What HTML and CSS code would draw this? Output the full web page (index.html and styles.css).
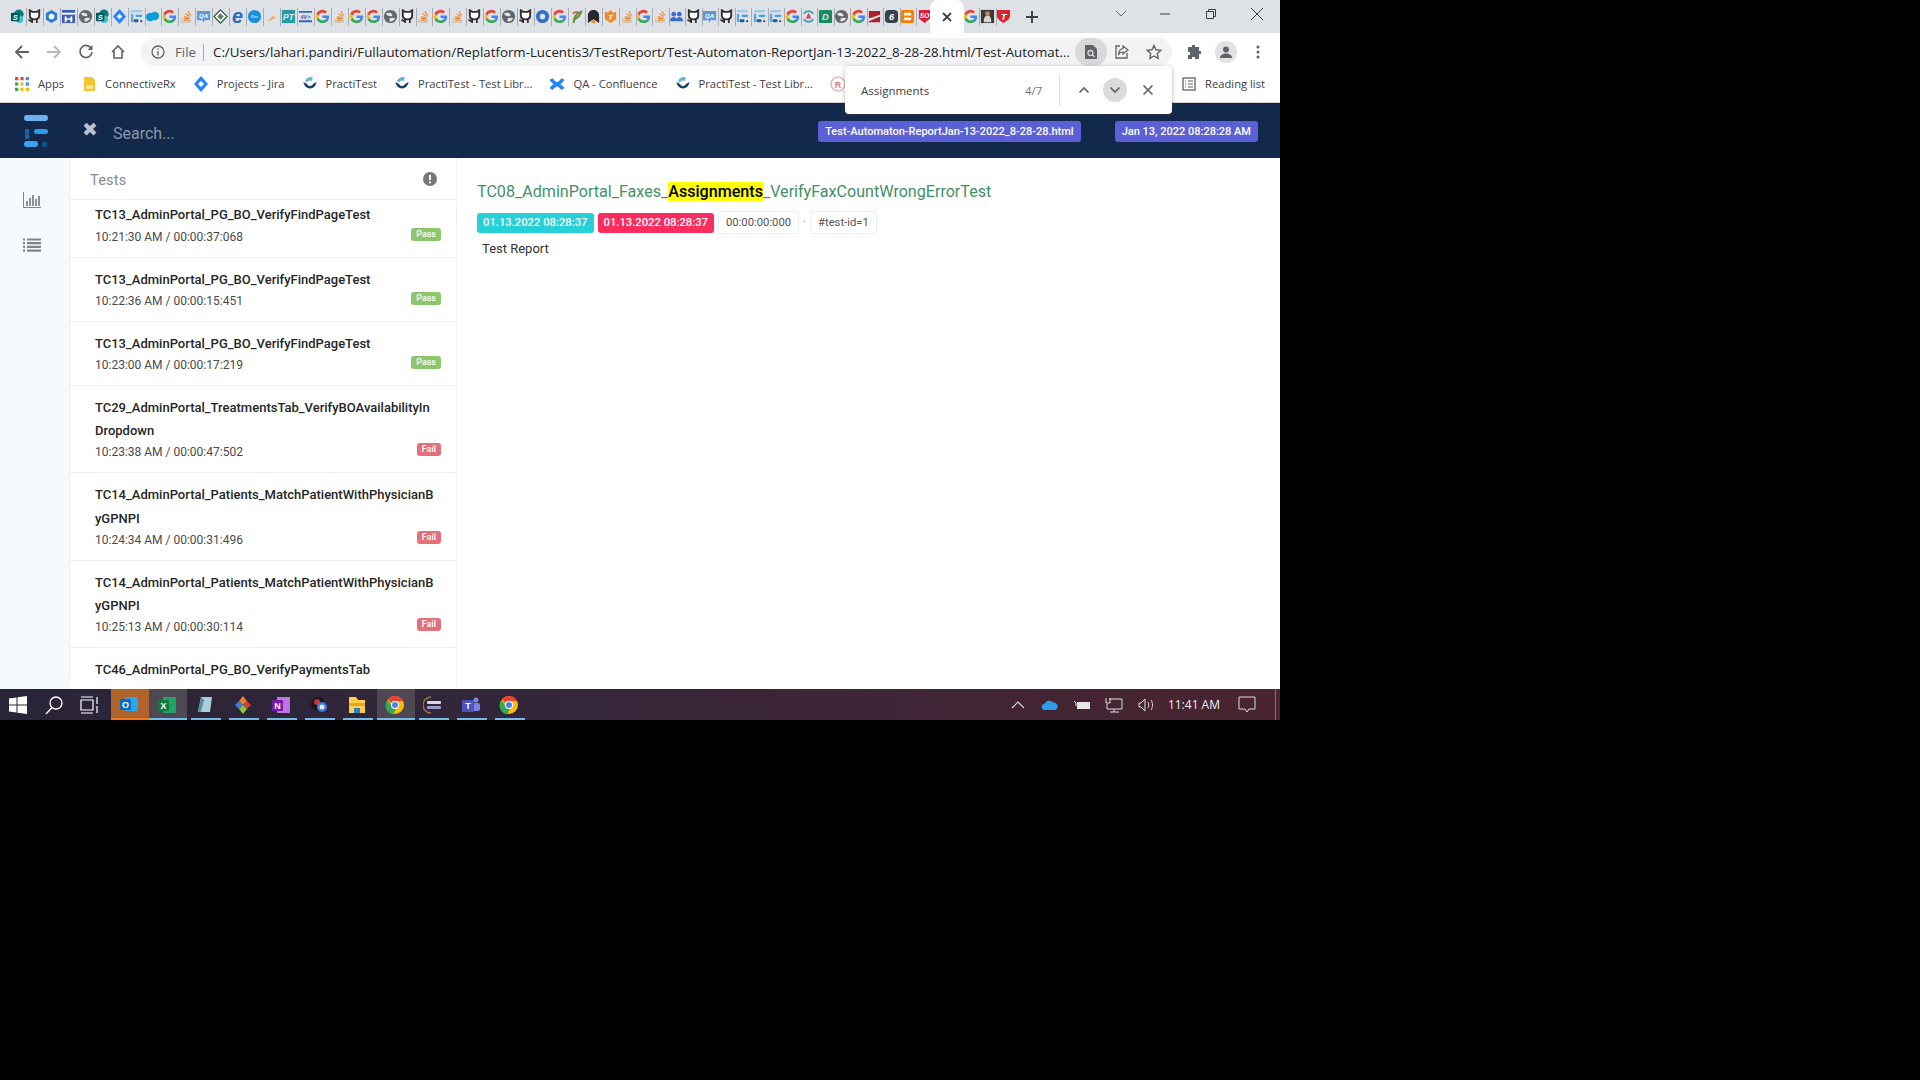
FILE: index.html
```html
<!doctype html>
<html>
<head>
    <meta charset="UTF-8">
    <link rel="stylesheet" href="styles.css">
</head>
<body>
    <svg class="defs" width="0" height="0">
        <symbol id="g" viewBox="0 0 16 16"><path d="M15 8.2c0-.5 0-1-.1-1.4H8v2.8h4a3.4 3.4 0 0 1-1.500 2.200l2.300 1.800c1.400-1.300 2.200-3.200 2.200-5.400z" fill="#4285f4"/><path d="M8 15c1.900 0 3.500-.6 4.800-1.700l-2.300-1.800c-.6.4-1.500.7-2.500.7-1.900 0-3.500-1.300-4.100-3L1.500 11c1.200 2.400 3.600 4 6.500 4z" fill="#34a853"/><path d="M3.900 9.200a4.300 4.300 0 0 1 0-2.500L1.500 5a7 7 0 0 0 0 6z" fill="#fbbc05"/><path d="M8 3.800c1.100 0 2 .4 2.800 1.100l2-2A7 7 0 0 0 1.500 5l2.400 1.800C4.500 5.100 6.100 3.800 8 3.800z" fill="#ea4335"/></symbol>
        <symbol id="gh" viewBox="0 0 16 16"><path d="M3 1.500l2.500 1.500h5L13 1.500V7c0 2.800-2 4-5 4S3 9.800 3 7z" fill="#fff" stroke="#2e2e2e" stroke-width="2"/><path d="M5.500 10.500v4.500M10.500 10.500v4.500M1.500 11.500l3 1.500" stroke="#2e2e2e" stroke-width="1.800" fill="none"/></symbol>
        <symbol id="sp" viewBox="0 0 16 16"><circle cx="9.500" cy="5.500" r="5" fill="#0b7d80"/><circle cx="10" cy="11" r="4" fill="#37c6d0"/><rect x="1" y="4" width="9" height="9" rx="1" fill="#04585c"/><text x="5.500" y="11.500" class="ft" font-size="8" fill="#fff" text-anchor="middle">S</text></symbol>
        <symbol id="gear" viewBox="0 0 16 16"><path d="M8 1l6 3.500v7L8 15l-6-3.500v-7z" fill="#2d7dd2"/><circle cx="8" cy="8" r="3" fill="#fff"/></symbol>
        <symbol id="hh" viewBox="0 0 16 16"><rect x="1" y="1" width="14" height="14" fill="#3d5cb8"/><rect x="1" y="4" width="14" height="2" fill="#fff"/><rect x="4" y="8" width="2" height="6" fill="#fff"/><rect x="10" y="8" width="2" height="6" fill="#fff"/><rect x="4" y="10" width="8" height="1.500" fill="#fff"/></symbol>
        <symbol id="globe" viewBox="0 0 16 16"><circle cx="8" cy="8" r="7" fill="#62676c"/><path d="M3 5c3-2 6-1 7 1s-3 2-5 1M7 10c2-1 5-1 6 0-1 2-4 4-6 3z" fill="#e4e6e8"/></symbol>
        <symbol id="jira" viewBox="0 0 16 16"><path d="M8 0l7 8-7 8-7-8z" fill="#2684ff"/><path d="M8 5l3 3-3 3-3-3z" fill="#fff"/></symbol>
        <symbol id="ext" viewBox="0 0 16 16"><rect x="2" y="1" width="12" height="2.500" rx="1" fill="#9ccbf0"/><rect x="2" y="5" width="2.500" height="9" rx="1" fill="#5aa5e0"/><rect x="7" y="6" width="7" height="2.500" rx="1" fill="#4a9be0"/><rect x="5" y="11" width="5" height="3" rx="1" fill="#1d5f96"/><rect x="12" y="12" width="2" height="2" fill="#164a78"/></symbol>
        <symbol id="sf" viewBox="0 0 16 16"><ellipse cx="5.500" cy="8.500" rx="4.500" ry="4.500" fill="#0d9dda"/><ellipse cx="10.500" cy="7.500" rx="4.500" ry="4.500" fill="#0d9dda"/></symbol>
        <symbol id="so" viewBox="0 0 16 16"><path d="M3 10v4h9v-4" fill="none" stroke="#c9bfb2" stroke-width="1.200"/><path d="M5 12h6M5 10l6 .5M5.500 8l5.500 1.500M7 5l4.500 3M9.500 2.500l3 4.500" stroke="#f48024" stroke-width="1.100" fill="none"/></symbol>
        <symbol id="qa" viewBox="0 0 16 16"><path d="M1 2h14v10H9l-1 3-1-3H1z" fill="#5b9ad6"/><text x="8" y="9.500" class="ft" font-size="6.500" fill="#fff" text-anchor="middle">QA</text></symbol>
        <symbol id="dia" viewBox="0 0 16 16"><path d="M8 1l7 7-7 7-7-7z" fill="#f4f5f2" stroke="#35553f" stroke-width="1.300"/><path d="M8 4.500L11.500 8 8 11.500 4.500 8z" fill="#5c7f60"/></symbol>
        <symbol id="ee" viewBox="0 0 16 16"><text x="8" y="14.500" class="ft" font-size="21" fill="#2a6bb5" text-anchor="middle">e</text></symbol>
        <symbol id="doc" viewBox="0 0 16 16"><circle cx="8" cy="8" r="7" fill="#1b90d8"/><text x="8" y="9.500" font-size="4" fill="#bfe3f7" text-anchor="middle" class="ft">Doc</text></symbol>
        <symbol id="swoosh" viewBox="0 0 16 16"><path d="M11 1c0 5-3 9-8 12 4-1 8-2 9-5-1 0-2 0-3 1 1-3 2-5 2-8z" fill="#f0a05a"/></symbol>
        <symbol id="pt" viewBox="0 0 16 16"><rect x="1" y="1" width="14" height="14" fill="#2a9aa8"/><text x="8" y="11.500" class="ft" font-size="9" font-style="italic" fill="#d8f3f5" text-anchor="middle">PT</text></symbol>
        <symbol id="api" viewBox="0 0 16 16"><path d="M1 3h14M1 13h14" stroke="#3366bb" stroke-width="2"/><text x="8" y="10.500" class="ft" font-size="6" fill="#3366bb" text-anchor="middle">4V&gt;</text></symbol>
        <symbol id="ring" viewBox="0 0 16 16"><circle cx="8" cy="8" r="5" fill="none" stroke="#2f6fc4" stroke-width="4"/></symbol>
        <symbol id="leaf" viewBox="0 0 16 16"><path d="M5 15c0-6 2-10 8-12-1 4-3 6-7 8" fill="none" stroke="#6b8e3a" stroke-width="2.200"/><path d="M4 5c2-2 5-2 7-1" stroke="#a0662e" stroke-width="1.800" fill="none"/></symbol>
        <symbol id="arch" viewBox="0 0 16 16"><path d="M2 15V7c0-4 3-6 6-6s6 2 6 6v8l-6-4z" fill="#26282b"/><path d="M5 15l3-4 3 4z" fill="#f28c28"/></symbol>
        <symbol id="shieldt" viewBox="0 0 16 16"><path d="M2 3l3 1 3-3 3 3 3-1v8l-6 4-6-4z" fill="#ee8a2c"/><text x="8" y="11.500" class="ft" font-size="8" fill="#fff" text-anchor="middle">T</text></symbol>
        <symbol id="people" viewBox="0 0 16 16"><circle cx="5" cy="5.500" r="2.500" fill="#3a6fc8"/><circle cx="11" cy="5.500" r="2.500" fill="#3a6fc8"/><path d="M1 13c0-3 2-4.500 4-4.500S9 10 9 13zM8 13c0-3 1-4.500 3-4.500s4 1.500 4 4.500z" fill="#3a6fc8"/></symbol>
        <symbol id="cycle" viewBox="0 0 16 16"><path d="M3 5a6 6 0 0 1 10 0M13 11a6 6 0 0 1-10 0" fill="none" stroke="#2ba4b5" stroke-width="2"/><path d="M8 4l3 6H5z" fill="#d8425a"/></symbol>
        <symbol id="dd" viewBox="0 0 16 16"><rect x="1" y="1" width="14" height="14" rx="1" fill="#1a8a5f"/><text x="8" y="12" class="ft" font-size="10" fill="#cfeee0" text-anchor="middle">D</text></symbol>
        <symbol id="ss" viewBox="0 0 16 16"><path d="M2 2h12v4L2 10zM14 8v6H2v-1z" fill="#b01d2e"/></symbol>
        <symbol id="six" viewBox="0 0 16 16"><rect x="1" y="1" width="14" height="14" rx="4" fill="#37424f"/><text x="8" y="12" class="ft" font-size="10" fill="#fff" text-anchor="middle">6</text></symbol>
        <symbol id="bb" viewBox="0 0 16 16"><rect x="1" y="1" width="14" height="14" rx="2" fill="#f57d00"/><rect x="4" y="4" width="8" height="3" rx="1" fill="#fff"/><rect x="4" y="9" width="8" height="3" rx="1" fill="#fff"/></symbol>
        <symbol id="sored" viewBox="0 0 16 16"><path d="M2 1h12v9l-6 5-6-5z" fill="#d71f35"/><text x="8" y="9.500" class="ft" font-size="7" fill="#fff" text-anchor="middle">SO</text></symbol>
        <symbol id="photo" viewBox="0 0 16 16"><rect x="1" y="1" width="14" height="14" fill="#3b3a38"/><path d="M4 14c0-4 1-7 4-7s4 3 4 7z" fill="#d9d4c8"/><circle cx="8" cy="5" r="2.500" fill="#c08a6a"/></symbol>
        <symbol id="tred" viewBox="0 0 16 16"><path d="M1 1h14v6c0 4-4 6-7 8-3-2-7-4-7-8z" fill="#d9232e"/><text x="8" y="11.500" class="ft" font-size="10" fill="#fff" text-anchor="middle">T</text></symbol>
        <symbol id="practi" viewBox="0 0 16 16"><path d="M1.500 6A6.500 6.500 0 0 0 14.500 6L11 8a3.200 3.200 0 0 1-6 0z" fill="#1f3f63"/><path d="M3 5a6 6 0 0 1 8-3.500L9.500 5A3 3 0 0 0 5 6.500z" fill="#5cb4dc"/></symbol>
        <symbol id="chrome" viewBox="0 0 20 20"><circle cx="10" cy="10" r="9" fill="#fbbc05"/><path d="M10 1a9 9 0 0 1 8 5h-8a4 4 0 0 0-4 2L3 4a9 9 0 0 1 7-3z" fill="#ea4335"/><path d="M2.500 5L7 12a4 4 0 0 0 4 2l-3 5.500A9 9 0 0 1 2.500 5z" fill="#34a853"/><circle cx="10" cy="10" r="4" fill="#fff"/><circle cx="10" cy="10" r="3" fill="#4285f4"/></symbol>
    </svg>

    <div class="window">
        <div class="tabstrip">
            <div class="tabs tabs-wide">
                <i class="tab"><svg><use href="#sp"/></svg></i><i class="tab"><svg><use href="#gh"/></svg></i><i class="tab"><svg><use href="#gear"/></svg></i><i class="tab"><svg><use href="#hh"/></svg></i><i class="tab"><svg><use href="#globe"/></svg></i><i class="tab"><svg><use href="#sp"/></svg></i><i class="tab"><svg><use href="#jira"/></svg></i><i class="tab"><svg><use href="#ext"/></svg></i><i class="tab"><svg><use href="#sf"/></svg></i><i class="tab"><svg><use href="#g"/></svg></i><i class="tab"><svg><use href="#so"/></svg></i><i class="tab"><svg><use href="#qa"/></svg></i><i class="tab"><svg><use href="#dia"/></svg></i><i class="tab"><svg><use href="#ee"/></svg></i><i class="tab"><svg><use href="#doc"/></svg></i><i class="tab"><svg><use href="#swoosh"/></svg></i><i class="tab"><svg><use href="#pt"/></svg></i><i class="tab"><svg><use href="#api"/></svg></i><i class="tab"><svg><use href="#g"/></svg></i><i class="tab"><svg><use href="#so"/></svg></i><i class="tab"><svg><use href="#g"/></svg></i><i class="tab"><svg><use href="#g"/></svg></i><i class="tab"><svg><use href="#globe"/></svg></i><i class="tab"><svg><use href="#gh"/></svg></i><i class="tab"><svg><use href="#so"/></svg></i><i class="tab"><svg><use href="#g"/></svg></i><i class="tab"><svg><use href="#so"/></svg></i><i class="tab"><svg><use href="#gh"/></svg></i><i class="tab"><svg><use href="#g"/></svg></i><i class="tab"><svg><use href="#globe"/></svg></i><i class="tab"><svg><use href="#gh"/></svg></i><i class="tab"><svg><use href="#ring"/></svg></i><i class="tab"><svg><use href="#g"/></svg></i><i class="tab"><svg><use href="#leaf"/></svg></i><i class="tab"><svg><use href="#arch"/></svg></i><i class="tab"><svg><use href="#shieldt"/></svg></i><i class="tab"><svg><use href="#so"/></svg></i>
            </div>
            <div class="tabs tabs-narrow">
                <i class="tab"><svg><use href="#g"/></svg></i><i class="tab"><svg><use href="#so"/></svg></i><i class="tab"><svg><use href="#people"/></svg></i><i class="tab"><svg><use href="#gh"/></svg></i><i class="tab"><svg><use href="#qa"/></svg></i><i class="tab"><svg><use href="#gh"/></svg></i><i class="tab"><svg><use href="#ext"/></svg></i><i class="tab"><svg><use href="#ext"/></svg></i><i class="tab"><svg><use href="#ext"/></svg></i><i class="tab"><svg><use href="#g"/></svg></i><i class="tab"><svg><use href="#cycle"/></svg></i><i class="tab"><svg><use href="#dd"/></svg></i><i class="tab"><svg><use href="#globe"/></svg></i><i class="tab"><svg><use href="#g"/></svg></i><i class="tab"><svg><use href="#ss"/></svg></i><i class="tab"><svg><use href="#six"/></svg></i><i class="tab"><svg><use href="#bb"/></svg></i><i class="tab"><svg><use href="#sored"/></svg></i>
            </div>
            <div class="tab-active">
                <svg width="12" height="12" viewBox="0 0 12 12"><path d="M2 2l8 8M10 2l-8 8" stroke="#3c4043" stroke-width="1.800"/></svg>
            </div>
            <div class="tabs tabs-after">
                <i class="tab tab-plain"><svg><use href="#g"/></svg></i><i class="tab"><svg><use href="#photo"/></svg></i><i class="tab"><svg><use href="#tred"/></svg></i>
            </div>
            <div class="new-tab">
                <svg width="14" height="14" viewBox="0 0 14 14"><path d="M7 1v12M1 7h12" stroke="#3c4043" stroke-width="2"/></svg>
            </div>
            <div class="win-controls">
                <svg class="win-chevron" width="12" height="8" viewBox="0 0 12 8"><path d="M1 1l5 5 5-5" fill="none" stroke="#6a6d72" stroke-width="1"/></svg>
                <span class="win-btn"><svg width="12" height="12" viewBox="0 0 12 12"><path d="M1 6h10" stroke="#3c4043"/></svg></span>
                <span class="win-btn"><svg width="12" height="12" viewBox="0 0 12 12"><path d="M1.500 3.500h7v7h-7zM3.500 3.500v-2h7v7h-2" fill="none" stroke="#3c4043"/></svg></span>
                <span class="win-btn"><svg width="14" height="14" viewBox="0 0 14 14"><path d="M1 1l12 12M13 1L1 13" stroke="#3c4043"/></svg></span>
            </div>
        </div>

        <div class="toolbar">
            <span class="tool-btn"><svg width="16" height="16" viewBox="0 0 16 16"><path d="M15 8H2M8 2L2 8l6 6" fill="none" stroke="#5f6368" stroke-width="1.800"/></svg></span>
            <span class="tool-btn"><svg width="16" height="16" viewBox="0 0 16 16"><path d="M1 8h13M8 2l6 6-6 6" fill="none" stroke="#b6b9bd" stroke-width="1.800"/></svg></span>
            <span class="tool-btn"><svg width="16" height="16" viewBox="0 0 16 16"><path d="M13.500 5A6 6 0 1 0 14 8" fill="none" stroke="#5f6368" stroke-width="1.700"/><path d="M14.500 1v5h-5z" fill="#5f6368"/></svg></span>
            <span class="tool-btn"><svg width="16" height="16" viewBox="0 0 16 16"><path d="M2 8l6-6 6 6M4 7v7h8V7" fill="none" stroke="#5f6368" stroke-width="1.600"/></svg></span>
            <div class="omnibox">
                <svg class="info-icon" width="14" height="14" viewBox="0 0 14 14"><circle cx="7" cy="7" r="6" fill="none" stroke="#5f6368" stroke-width="1.300"/><path d="M7 6v4.500M7 3.500v1.300" stroke="#5f6368" stroke-width="1.300"/></svg>
                <span class="omni-file">File</span>
                <span class="omni-url">C:/Users/lahari.pandiri/Fullautomation/Replatform-Lucentis3/TestReport/Test-Automaton-ReportJan-13-2022_8-28-28.html/Test-Automat...</span>
                <span class="omni-lens"><svg width="14" height="16" viewBox="0 0 14 16"><path d="M1 1h8l4 4v10H1z" fill="#5f6368"/><circle cx="6.500" cy="9" r="2.500" fill="none" stroke="#d8d9da" stroke-width="1.300"/><path d="M8.500 11l2 2" stroke="#d8d9da" stroke-width="1.300"/></svg></span>
                <span class="omni-icon"><svg width="16" height="16" viewBox="0 0 16 16"><path d="M6 2H2v12h11V9" fill="none" stroke="#5f6368" stroke-width="1.300"/><path d="M9 2l5 4-5 4V8C7 8 5 9 4.500 11c0-4 2-6 4.500-6.500z" fill="none" stroke="#5f6368" stroke-width="1.200"/></svg></span>
                <span class="omni-icon"><svg width="16" height="16" viewBox="0 0 16 16"><path d="M8 1.500l2 4.300 4.700.6-3.400 3.200.9 4.700L8 12l-4.200 2.300.9-4.700L1.300 6.400 6 5.800z" fill="none" stroke="#5f6368" stroke-width="1.400"/></svg></span>
            </div>
            <span class="tool-btn tool-puzzle"><svg width="16" height="16" viewBox="0 0 16 16"><path d="M6 1h3v2h4v4h2v3h-2v5H9v-2H6v2H2v-4h2V8H2V3h4z" fill="#5f6368"/></svg></span>
            <span class="tool-btn"><span class="avatar"><svg width="14" height="14" viewBox="0 0 14 14"><circle cx="7" cy="4.500" r="3" fill="#5f6368"/><path d="M1 13c0-3 3-4.500 6-4.500s6 1.500 6 4.500z" fill="#5f6368"/></svg></span></span>
            <span class="tool-btn"><svg width="4" height="14" viewBox="0 0 4 14"><circle cx="2" cy="2" r="1.500" fill="#5f6368"/><circle cx="2" cy="7" r="1.500" fill="#5f6368"/><circle cx="2" cy="12" r="1.500" fill="#5f6368"/></svg></span>
        </div>

        <div class="bookmarks">
            <a class="bm bm-apps"><svg width="16" height="16" viewBox="0 0 15 15"><rect x="1" y="1" width="3" height="3" fill="#ea4335"/><rect x="6" y="1" width="3" height="3" fill="#ea4335"/><rect x="11" y="1" width="3" height="3" fill="#4285f4"/><rect x="1" y="6" width="3" height="3" fill="#34a853"/><rect x="6" y="6" width="3" height="3" fill="#fbbc05"/><rect x="11" y="6" width="3" height="3" fill="#4285f4"/><rect x="1" y="11" width="3" height="3" fill="#34a853"/><rect x="6" y="11" width="3" height="3" fill="#fbbc05"/><rect x="11" y="11" width="3" height="3" fill="#fbbc05"/></svg>Apps</a>
            <a class="bm bm-cr"><svg width="16" height="16" viewBox="0 0 16 16"><path d="M3 1h8l3 3v11H3z" fill="#f4c430"/><path d="M5 9h7v4H5z" fill="#fbe38e"/></svg>ConnectiveRx</a>
            <a class="bm bm-jira"><svg width="16" height="16"><use href="#jira"/></svg>Projects - Jira</a>
            <a class="bm bm-pt"><svg width="16" height="16"><use href="#practi"/></svg>PractiTest</a>
            <a class="bm bm-lib"><svg width="16" height="16"><use href="#practi"/></svg>PractiTest - Test Libr...</a>
            <a class="bm bm-conf"><svg width="16" height="16" viewBox="0 0 16 16"><path d="M2 3c3 6 8 4 12 10M14 3C11 9 6 7 2 13" fill="none" stroke="#2684ff" stroke-width="3.600"/></svg>QA - Confluence</a>
            <a class="bm bm-lib"><svg width="16" height="16"><use href="#practi"/></svg>PractiTest - Test Libr...</a>
            <a class="bm"><svg width="16" height="16" viewBox="0 0 16 16"><circle cx="8" cy="8" r="7" fill="none" stroke="#e8a0a0" stroke-width="1.200"/><text x="8" y="11.500" class="ft" font-size="9" fill="#d88080" text-anchor="middle">R</text></svg></a>
            <a class="bm reading"><svg width="16" height="16" viewBox="0 0 16 16"><rect x="2" y="2" width="12" height="12" fill="none" stroke="#5f6368" stroke-width="1.300"/><path d="M4 5h1M7 5h5M4 8h1M7 8h5M4 11h1M7 11h5" stroke="#5f6368"/></svg>Reading list</a>
        </div>

        <div class="findbar">
            <span class="find-text">Assignments</span>
            <span class="find-count">4/7</span>
            <span class="find-sep"></span>
            <span class="find-btn"><svg width="12" height="8" viewBox="0 0 12 8"><path d="M1.500 6.500L6 2l4.500 4.500" fill="none" stroke="#5f6368" stroke-width="1.700"/></svg></span>
            <span class="find-btn find-btn-on"><svg width="12" height="8" viewBox="0 0 12 8"><path d="M1.500 1.500L6 6l4.500-4.500" fill="none" stroke="#5f6368" stroke-width="1.700"/></svg></span>
            <span class="find-btn"><svg width="12" height="12" viewBox="0 0 12 12"><path d="M1.500 1.500l9 9M10.500 1.500l-9 9" stroke="#5f6368" stroke-width="1.700"/></svg></span>
        </div>

        <header class="report-nav">
            <svg class="logo" width="24" height="34" viewBox="0 0 24 34"><rect x="0" y="1" width="24" height="6" rx="3" fill="#6fb1ef"/><rect x="10" y="15" width="14" height="5" rx="2.500" fill="#2f9ae8"/><rect x="1" y="15" width="4" height="10" rx="1" fill="#1565a8"/><rect x="0" y="27" width="14" height="6" rx="3" fill="#3aa5ee"/><rect x="18" y="28" width="5" height="5" rx="1" fill="#124f86"/></svg>
            <span class="search-x">✖</span>
            <span class="search-label">Search...</span>
            <span class="nav-badge nav-badge-file">Test-Automaton-ReportJan-13-2022_8-28-28.html</span>
            <span class="nav-badge">Jan 13, 2022 08:28:28 AM</span>
        </header>

        <div class="report-main">
            <aside class="side-nav">
                <svg width="18" height="16" viewBox="0 0 18 16"><path d="M.5 0v15.500H18" fill="none" stroke="#7d8690"/><path d="M4 9v5M7 6v8M10 3v11M13 7v7M16 4v10" stroke="#7d8690" stroke-width="1.800"/></svg>
                <svg width="18" height="14" viewBox="0 0 18 14"><path d="M0 1.500h2M4 1.500h14M0 5.200h2M4 5.200h14M0 8.900h2M4 8.900h14M0 12.600h2M4 12.600h14" stroke="#7d8690" stroke-width="2.200"/></svg>
            </aside>

            <section class="tests-panel">
                <div class="tests-inner">
                    <div class="tests-head">
                        <span class="tests-label">Tests</span>
                        <svg width="14" height="14" viewBox="0 0 14 14"><circle cx="7" cy="7" r="7" fill="#777"/><path d="M7 3v5M7 9.500v1.700" stroke="#fff" stroke-width="2"/></svg>
                    </div>
                    <div class="tests-scroll">
                        <ul class="tests-list">
                            <li><div class="test-name">TC13_AdminPortal_PG_BO_VerifyFindPageTest</div><div class="test-meta"><span>10:21:30 AM / 00:00:37:068</span><span class="status pass">Pass</span></div></li>
                            <li><div class="test-name">TC13_AdminPortal_PG_BO_VerifyFindPageTest</div><div class="test-meta"><span>10:22:36 AM / 00:00:15:451</span><span class="status pass">Pass</span></div></li>
                            <li><div class="test-name">TC13_AdminPortal_PG_BO_VerifyFindPageTest</div><div class="test-meta"><span>10:23:00 AM / 00:00:17:219</span><span class="status pass">Pass</span></div></li>
                            <li><div class="test-name">TC29_AdminPortal_TreatmentsTab_VerifyBOAvailabilityInDropdown</div><div class="test-meta"><span>10:23:38 AM / 00:00:47:502</span><span class="status fail">Fail</span></div></li>
                            <li><div class="test-name">TC14_AdminPortal_Patients_MatchPatientWithPhysicianByGPNPI</div><div class="test-meta"><span>10:24:34 AM / 00:00:31:496</span><span class="status fail">Fail</span></div></li>
                            <li><div class="test-name">TC14_AdminPortal_Patients_MatchPatientWithPhysicianByGPNPI</div><div class="test-meta"><span>10:25:13 AM / 00:00:30:114</span><span class="status fail">Fail</span></div></li>
                            <li><div class="test-name">TC46_AdminPortal_PG_BO_VerifyPaymentsTab</div></li>
                        </ul>
                    </div>
                </div>
            </section>

            <section class="test-detail">
                <h5 class="detail-title">TC08_AdminPortal_Faxes_<mark>Assignments</mark>_VerifyFaxCountWrongErrorTest</h5>
                <div class="detail-tags">
                    <span class="tag tag-start">01.13.2022 08:28:37</span>
                    <span class="tag tag-end">01.13.2022 08:28:37</span>
                    <span class="tag tag-line">00:00:00:000</span>
                    <span class="tag-dot">·</span>
                    <span class="tag tag-line tag-id">#test-id=1</span>
                </div>
                <p class="detail-desc">Test Report</p>
            </section>
        </div>

        <footer class="taskbar">
            <span class="task-sys"><svg width="20" height="20" viewBox="0 0 20 20"><path d="M1 3.500l7.500-1v7H1zM9.500 2.300L19 1v8.500H9.500zM1 10.500h7.500v7l-7.500-1zM9.500 10.500H19V19l-9.500-1.300z" fill="#fff"/></svg></span>
            <span class="task-sys"><svg width="20" height="20" viewBox="0 0 20 20"><circle cx="12" cy="8" r="6" fill="none" stroke="#fff" stroke-width="1.300"/><path d="M8 12.500L2 19" stroke="#fff" stroke-width="1.300"/></svg></span>
            <span class="task-sys"><svg width="20" height="20" viewBox="0 0 20 20"><path d="M1 5h12v10H1zM1 2h12M1 18h12M17 2v7M17 11v7" fill="none" stroke="#fff" stroke-width="1.200"/></svg></span>
            <span class="task-app task-outlook"><svg width="20" height="20" viewBox="0 0 20 20"><rect x="6" y="3" width="13" height="14" fill="#28a8ea"/><rect x="1" y="5" width="11" height="11" rx="1" fill="#0f6cbd"/><text x="6.500" y="13.500" class="ft" font-size="9" fill="#fff" text-anchor="middle">O</text></svg></span>
            <span class="task-app task-hover task-on"><svg width="20" height="20" viewBox="0 0 20 20"><rect x="6" y="2" width="13" height="16" fill="#21a366"/><rect x="1" y="5" width="11" height="11" rx="1" fill="#107c41"/><text x="6.500" y="13.500" class="ft" font-size="9" fill="#fff" text-anchor="middle">X</text></svg></span>
            <span class="task-app task-on"><svg width="20" height="20" viewBox="0 0 20 20"><path d="M6 2h11l-2 15H3z" fill="#a9d0d8"/><path d="M6 2l3 3-3 12H3z" fill="#5d8d98"/></svg></span>
            <span class="task-app task-on"><svg width="20" height="20" viewBox="0 0 20 20"><path d="M10 1l4 5-4 4-4-4z" fill="#e8832a"/><path d="M6 6l4 4-4 4-4-4z" fill="#3f7ed8"/><path d="M14 6l4 4-4 4-4-4z" fill="#d43d3d"/><path d="M10 10l4 4-4 5-4-5z" fill="#8cc63f"/></svg></span>
            <span class="task-app task-on"><svg width="20" height="20" viewBox="0 0 20 20"><rect x="6" y="2" width="13" height="16" fill="#ba77e0"/><rect x="1" y="5" width="11" height="11" rx="1" fill="#7719aa"/><text x="6.500" y="13.500" class="ft" font-size="9" fill="#fff" text-anchor="middle">N</text></svg></span>
            <span class="task-app task-on"><svg width="20" height="20" viewBox="0 0 20 20"><circle cx="9" cy="9" r="7" fill="#17181a"/><circle cx="8" cy="7" r="3" fill="#c8332e"/><circle cx="13" cy="12" r="5" fill="#3f7ed8"/><circle cx="13" cy="12" r="2.500" fill="#dfe6ee"/></svg></span>
            <span class="task-app task-on"><svg width="20" height="20" viewBox="0 0 20 20"><path d="M2 2h7l2 3h7v13H2z" fill="#ffcf4a"/><rect x="2" y="8" width="16" height="3" fill="#e8a922"/><rect x="7" y="13" width="6" height="5" fill="#2a7fd0"/></svg></span>
            <span class="task-app task-hover task-on"><svg width="20" height="20"><use href="#chrome"/></svg></span>
            <span class="task-app task-on"><svg width="20" height="20" viewBox="0 0 20 20"><path d="M8 2a8 8 0 0 0 0 16" fill="none" stroke="#a57445" stroke-width="1.500"/><rect x="4" y="6" width="14" height="3" rx="1" fill="#d8d8e8"/><rect x="4" y="11" width="14" height="3" rx="1" fill="#9a9ac8"/></svg></span>
            <span class="task-app task-on"><svg width="20" height="20" viewBox="0 0 20 20"><circle cx="15" cy="5" r="2.500" fill="#7b83eb"/><rect x="11" y="8" width="8" height="8" rx="2" fill="#7b83eb"/><rect x="1" y="5" width="12" height="12" rx="1" fill="#4b53bc"/><text x="7" y="14" class="ft" font-size="9" fill="#fff" text-anchor="middle">T</text></svg></span>
            <span class="task-app task-on"><svg width="20" height="20"><use href="#chrome"/></svg></span>

            <div class="tray">
                <svg class="tray-up" width="14" height="8" viewBox="0 0 14 8"><path d="M1 7l6-6 6 6" fill="none" stroke="#ddd" stroke-width="1.100"/></svg>
                <svg class="tray-cloud" width="18" height="12" viewBox="0 0 18 12"><path d="M4 11a3 3 0 0 1-.5-6A5 5 0 0 1 12 3.500 4 4 0 0 1 14.500 11z" fill="#2f9ee8"/></svg>
                <svg class="tray-batt" width="18" height="12" viewBox="0 0 18 12"><rect x="4" y="3" width="13" height="7" fill="#e6e6e6"/><path d="M1 2l2 2v3" stroke="#e6e6e6" fill="none"/></svg>
                <svg class="tray-net" width="18" height="16" viewBox="0 0 18 16"><path d="M4 2h13v10H2V7M9 12v3M5 15h9M1 1v5h4V1" fill="none" stroke="#ddd"/></svg>
                <svg class="tray-vol" width="16" height="14" viewBox="0 0 16 14"><path d="M1 5h2l4-4v12l-4-4H1zM10 4c1 2 1 4 0 6M13 2c2 3 2 7 0 10" fill="none" stroke="#ddd"/></svg>
                <span class="tray-clock">11:41 AM</span>
                <svg class="tray-note" width="18" height="18" viewBox="0 0 18 18"><path d="M1 1h16v12h-6l-2 3-2-3H1z" fill="none" stroke="#ddd"/></svg>
                <span class="tray-edge"></span>
            </div>
        </footer>
    </div>
</body>
</html>
```

FILE: styles.css
```css
* {
    box-sizing: border-box;
}
body {
    margin: 0;
    background-color: #000;
    font-family: Roboto, "Liberation Sans", sans-serif;
}
.defs {
    display: none;
}
.ft {
    font-family: "Liberation Sans", sans-serif;
    font-weight: bold;
}

.window {
    position: relative;
    width: 1280px;
    height: 720px;
    background-color: #fff;
    display: flex;
    flex-direction: column;
    overflow: hidden;
}

/* chrome tabs */
.tabstrip {
    height: 33px;
    flex: none;
    background-color: #dee1e6;
    display: flex;
    padding-left: 9px;
}
.tabs {
    display: flex;
}
.tab {
    flex: none;
    height: 33px;
    display: flex;
    align-items: center;
    justify-content: center;
    background: linear-gradient(#a9acb1, #a9acb1) left center / 1px 18px no-repeat;
}
.tab:first-child {
    background: none;
}
.tab svg {
    width: 15px;
    height: 15px;
}
.tabs-wide .tab {
    width: 16.95px;
}
.tabs-narrow .tab {
    width: 16.5px;
}
.tabs-narrow .tab:first-child {
    background: linear-gradient(#a9acb1, #a9acb1) left center / 1px 18px no-repeat;
}
.tabs-after .tab {
    width: 16.5px;
}
.tab-active {
    flex: none;
    width: 34px;
    height: 33px;
    margin-left: -3px;
    background-color: #fff;
    border-radius: 8px 8px 0 0;
    display: flex;
    align-items: center;
    justify-content: center;
    position: relative;
}
.tabs-after {
    margin-left: -1px;
}
.new-tab {
    width: 14px;
    margin-left: 13px;
    display: flex;
    align-items: center;
}
.win-controls {
    margin-left: auto;
    display: flex;
    align-items: center;
    height: 28px;
}
.win-btn {
    width: 46px;
    display: flex;
    justify-content: center;
}
.win-chevron {
    margin-right: 15px;
}

/* chrome toolbar */
.toolbar {
    height: 35px;
    flex: none;
    background-color: #fff;
    display: flex;
    align-items: center;
    padding: 3px 0 0 6px;
}
.tool-btn {
    flex: none;
    width: 32px;
    height: 32px;
    display: flex;
    align-items: center;
    justify-content: center;
}
.omnibox {
    flex: none;
    width: 1031px;
    height: 28px;
    margin-left: 7px;
    margin-right: 6px;
    background-color: #f1f3f4;
    border-radius: 14px;
    display: flex;
    align-items: center;
    padding-left: 10px;
    font-family: "Open Sans", sans-serif;
    font-size: 13.3px;
    color: #202124;
    white-space: nowrap;
}
.info-icon {
    flex: none;
}
.omni-file {
    flex: none;
    width: 29px;
    margin-left: 10px;
    color: #5f6368;
    border-right: 1px solid #aaadb1;
    line-height: 17px;
}
.omni-url {
    margin-left: 9px;
    width: 856px;
    flex: none;
    overflow: hidden;
}
.omni-lens {
    flex: none;
    width: 32px;
    height: 28px;
    margin-left: 6px;
    margin-right: -1px;
    border-radius: 14px;
    background-color: #d8d9da;
    display: flex;
    align-items: center;
    justify-content: center;
}
.omni-icon {
    flex: none;
    width: 32px;
    display: flex;
    justify-content: center;
}
.avatar {
    width: 22px;
    height: 22px;
    border-radius: 50%;
    background-color: #e0e2e6;
    display: flex;
    align-items: center;
    justify-content: center;
}

/* bookmarks */
.bookmarks {
    height: 35px;
    flex: none;
    background-color: #fff;
    border-bottom: 1px solid #d3d5d8;
    display: flex;
    align-items: center;
    padding: 0 0 3px 14px;
    gap: 17px;
    font-family: "Open Sans", sans-serif;
    font-size: 11.2px;
    color: #3c4043;
    white-space: nowrap;
}
.bm {
    display: flex;
    align-items: center;
    gap: 8px;
}
.reading {
    margin-left: auto;
    margin-right: 15px;
}

/* find in page */
.findbar {
    position: absolute;
    left: 845px;
    top: 66px;
    width: 327px;
    height: 48px;
    background-color: #fff;
    border-radius: 4px;
    box-shadow: 0 1px 4px rgba(60, 64, 67, 0.4);
    display: flex;
    align-items: center;
    padding-left: 16px;
    font-family: "Open Sans", sans-serif;
    font-size: 11.5px;
    color: #3c4043;
}
.find-text {
    width: 164px;
}
.find-count {
    width: 34px;
    color: #70757a;
}
.find-sep {
    width: 1px;
    height: 32px;
    background-color: #e3e4e6;
    margin-right: 8px;
}
.find-btn {
    width: 32px;
    height: 32px;
    display: flex;
    align-items: center;
    justify-content: center;
}
.find-btn-on {
    width: 24px;
    height: 24px;
    margin: 0 5px 0 3px;
    border-radius: 50%;
    background-color: #dadbdc;
}

/* report header */
.report-nav {
    height: 55px;
    flex: none;
    background-color: #13294b;
    display: flex;
    align-items: center;
    padding-left: 24px;
    padding-right: 22px;
}
.search-x {
    flex: none;
    width: 16px;
    margin-left: 34px;
    margin-top: -4px;
    color: #bdc3cc;
    font-size: 19px;
    line-height: 20px;
    font-family: "DejaVu Sans", sans-serif;
}
.search-label {
    margin-left: 15px;
    margin-top: 5px;
    color: #8a98ad;
    font-size: 16px;
}
.nav-badge {
    margin-left: 34px;
    margin-top: 2px;
    height: 21px;
    line-height: 21px;
    padding: 0 7px;
    background-color: #5c60d6;
    border-radius: 3px;
    color: #fff;
    font-size: 11px;
    font-weight: 500;
}
.nav-badge-file {
    margin-left: auto;
}

/* report body */
.report-main {
    flex: 1;
    min-height: 0;
    display: flex;
}
.side-nav {
    width: 69px;
    flex: none;
    background-color: #f6fafd;
    display: flex;
    flex-direction: column;
    align-items: center;
    gap: 30px;
    padding: 34px 6px 0 0;
}
.tests-panel {
    width: 388px;
    flex: none;
    border-right: 1px solid #eceef0;
}
.tests-inner {
    height: 521px;
    border-left: 1px solid #eceef0;
    display: flex;
    flex-direction: column;
}
.tests-head {
    height: 42px;
    flex: none;
    display: flex;
    align-items: center;
    justify-content: space-between;
    padding: 0 19px 0 20px;
    border-bottom: 1px solid #eceef0;
    color: #8a8a8a;
    font-size: 14.5px;
    letter-spacing: 0.2px;
}
.tests-label {
    margin-top: 3px;
}
.tests-scroll {
    flex: 1;
    min-height: 0;
    overflow: hidden;
}
.tests-list {
    list-style: none;
    margin: -6.6px 0 0 0;
    padding: 0;
}
.tests-list li {
    padding: 10px 15px 9px 25px;
    border-bottom: 1px solid #eceef0;
}
.test-name {
    margin-right: 5px;
    font-size: 13px;
    font-weight: 500;
    line-height: 23.2px;
    color: #262626;
    word-break: break-all;
}
.test-meta {
    display: flex;
    justify-content: space-between;
    align-items: center;
    line-height: 21px;
    font-size: 12px;
    color: #4a4a4a;
}
.status {
    height: 13px;
    line-height: 12px;
    padding: 0 5px;
    margin-bottom: 6px;
    border-radius: 3px;
    color: #fff;
    font-size: 9px;
    font-weight: 500;
}
.pass {
    background-color: #8dc66b;
}
.fail {
    background-color: #e4707a;
}

.test-detail {
    flex: 1;
    padding: 24px 20px 0 20px;
}
.detail-title {
    margin: 0;
    font-size: 16.1px;
    font-weight: 400;
    line-height: 20px;
    color: #3f9068;
}
.detail-title mark {
    background-color: #ffff00;
    color: #000;
    font-weight: 500;
}
.detail-tags {
    margin-top: 9px;
    display: flex;
    align-items: center;
    gap: 4px;
    font-size: 11.25px;
}
.tag {
    height: 20px;
    line-height: 20px;
    padding: 0 6px;
    border-radius: 3px;
    color: #fff;
    font-weight: 500;
}
.tag-start {
    background-color: #25d0d8;
}
.tag-end {
    background-color: #fb2c5e;
}
.tag-line {
    height: 23px;
    line-height: 21px;
    padding: 0 7px;
    border: 1px solid #eceef0;
    color: #555;
    font-weight: 400;
}
.tag-dot {
    color: #777;
}
.detail-desc {
    margin: 5px 0 0 5px;
    font-size: 13px;
    line-height: 20px;
    color: #333;
}

/* windows taskbar */
.taskbar {
    height: 31px;
    flex: none;
    background: linear-gradient(90deg, #2a2438, #33263a 40%, #4a2431);
    display: flex;
}
.task-sys {
    width: 36px;
    display: flex;
    align-items: center;
    justify-content: center;
}
.task-sys + .task-app {
    margin-left: 3px;
}
.task-app {
    width: 38px;
    position: relative;
    display: flex;
    align-items: center;
    justify-content: center;
    padding-right: 3px;
}
.task-outlook {
    background-color: #b0642c;
    border-bottom: 2px solid #f17a1c;
}
.task-hover {
    background-color: #4e4853;
}
.task-on::after {
    content: "";
    position: absolute;
    left: 4px;
    right: 4px;
    bottom: 0;
    height: 2px;
    background-color: #76b9ed;
}
.task-hover::after {
    left: 0;
    right: 0;
}
.tray {
    margin-left: auto;
    display: flex;
    align-items: center;
    color: #eee;
    font-family: "Open Sans", sans-serif;
    font-size: 12px;
}
.tray-cloud {
    margin-left: 16px;
}
.tray-batt {
    margin-left: 14px;
}
.tray-net {
    margin-left: 14px;
}
.tray-vol {
    margin-left: 15px;
}
.tray-clock {
    margin-left: 14px;
}
.tray-note {
    margin-left: 18px;
}
.tray-edge {
    width: 1px;
    height: 31px;
    margin-left: 19px;
    margin-right: 4px;
    background-color: #777;
}
```
